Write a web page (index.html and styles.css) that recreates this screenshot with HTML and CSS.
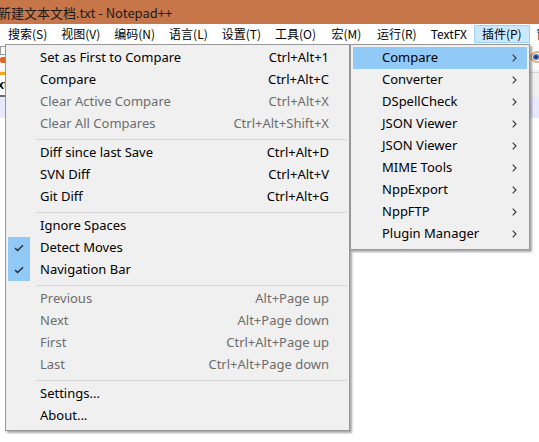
FILE: index.html
```html
<!DOCTYPE html>
<html>
<head>
<meta charset="utf-8">
<link rel="stylesheet" href="styles.css">
</head>
<body>
<div class="app">
  <div class="titlebar"><span class="title">新建文本文档.txt - Notepad++</span></div>
  <div class="menubar">
    <span class="mb-item">搜索(S)</span>
    <span class="mb-item">视图(V)</span>
    <span class="mb-item">编码(N)</span>
    <span class="mb-item">语言(L)</span>
    <span class="mb-item">设置(T)</span>
    <span class="mb-item wide">工具(O)</span>
    <span class="mb-item wide">宏(M)</span>
    <span class="mb-item">运行(R)</span>
    <span class="mb-item">TextFX</span>
    <span class="mb-item active">插件(P)</span>
    <span class="mb-item">窗口(W)</span>
  </div>
  <div class="toolbar">
    <div class="tb-left">
      <span class="tb-doc"></span>
      <span class="tb-red"></span>
    </div>
    <div class="tb-right">
      <svg class="eye" width="14" height="14" viewBox="0 0 14 14"><ellipse cx="8" cy="7" rx="6" ry="5" fill="#fff" stroke="#e0965a" stroke-width="1.5"/><circle cx="7" cy="7" r="3" fill="#3b6fb0"/><circle cx="7" cy="7" r="1.3" fill="#1a2d50"/></svg>
    </div>
  </div>
  <div class="tabbar">
    <div class="tab-active"><span class="tab-text">new 1.txt:</span></div>
    <div class="tab-rest"></div>
  </div>
  <div class="editor">
    <div class="curline"></div>
  </div>

  <div class="menu main-menu">
    <div class="mi"><span class="gut"></span><span class="lbl">Set as First to Compare</span><span class="sc">Ctrl+Alt+1</span></div>
    <div class="mi"><span class="gut"></span><span class="lbl">Compare</span><span class="sc">Ctrl+Alt+C</span></div>
    <div class="mi dis"><span class="gut"></span><span class="lbl">Clear Active Compare</span><span class="sc">Ctrl+Alt+X</span></div>
    <div class="mi dis"><span class="gut"></span><span class="lbl">Clear All Compares</span><span class="sc">Ctrl+Alt+Shift+X</span></div>
    <div class="sep"></div>
    <div class="mi"><span class="gut"></span><span class="lbl">Diff since last Save</span><span class="sc">Ctrl+Alt+D</span></div>
    <div class="mi"><span class="gut"></span><span class="lbl">SVN Diff</span><span class="sc">Ctrl+Alt+V</span></div>
    <div class="mi"><span class="gut"></span><span class="lbl">Git Diff</span><span class="sc">Ctrl+Alt+G</span></div>
    <div class="sep"></div>
    <div class="mi"><span class="gut"></span><span class="lbl">Ignore Spaces</span><span class="sc"></span></div>
    <div class="mi"><span class="gut checked"><svg width="10" height="8" viewBox="0 0 10 8"><polyline points="1,4 3.6,6.6 9,1.2" fill="none" stroke="#2b2b2b" stroke-width="1.4"/></svg></span><span class="lbl">Detect Moves</span><span class="sc"></span></div>
    <div class="mi"><span class="gut checked"><svg width="10" height="8" viewBox="0 0 10 8"><polyline points="1,4 3.6,6.6 9,1.2" fill="none" stroke="#2b2b2b" stroke-width="1.4"/></svg></span><span class="lbl">Navigation Bar</span><span class="sc"></span></div>
    <div class="sep"></div>
    <div class="mi dis"><span class="gut"></span><span class="lbl">Previous</span><span class="sc">Alt+Page up</span></div>
    <div class="mi dis"><span class="gut"></span><span class="lbl">Next</span><span class="sc">Alt+Page down</span></div>
    <div class="mi dis"><span class="gut"></span><span class="lbl">First</span><span class="sc">Ctrl+Alt+Page up</span></div>
    <div class="mi dis"><span class="gut"></span><span class="lbl">Last</span><span class="sc">Ctrl+Alt+Page down</span></div>
    <div class="sep"></div>
    <div class="mi"><span class="gut"></span><span class="lbl">Settings...</span><span class="sc"></span></div>
    <div class="mi"><span class="gut"></span><span class="lbl">About...</span><span class="sc"></span></div>
  </div>

  <div class="menu sub-menu">
    <div class="si hot"><span class="lbl">Compare</span><svg class="arr" width="5" height="8" viewBox="0 0 5 8"><polyline points="0.7,0.7 4,4 0.7,7.3" fill="none" stroke="#333" stroke-width="1.1"/></svg></div>
    <div class="si"><span class="lbl">Converter</span><svg class="arr" width="5" height="8" viewBox="0 0 5 8"><polyline points="0.7,0.7 4,4 0.7,7.3" fill="none" stroke="#333" stroke-width="1.1"/></svg></div>
    <div class="si"><span class="lbl">DSpellCheck</span><svg class="arr" width="5" height="8" viewBox="0 0 5 8"><polyline points="0.7,0.7 4,4 0.7,7.3" fill="none" stroke="#333" stroke-width="1.1"/></svg></div>
    <div class="si"><span class="lbl">JSON Viewer</span><svg class="arr" width="5" height="8" viewBox="0 0 5 8"><polyline points="0.7,0.7 4,4 0.7,7.3" fill="none" stroke="#333" stroke-width="1.1"/></svg></div>
    <div class="si"><span class="lbl">JSON Viewer</span><svg class="arr" width="5" height="8" viewBox="0 0 5 8"><polyline points="0.7,0.7 4,4 0.7,7.3" fill="none" stroke="#333" stroke-width="1.1"/></svg></div>
    <div class="si"><span class="lbl">MIME Tools</span><svg class="arr" width="5" height="8" viewBox="0 0 5 8"><polyline points="0.7,0.7 4,4 0.7,7.3" fill="none" stroke="#333" stroke-width="1.1"/></svg></div>
    <div class="si"><span class="lbl">NppExport</span><svg class="arr" width="5" height="8" viewBox="0 0 5 8"><polyline points="0.7,0.7 4,4 0.7,7.3" fill="none" stroke="#333" stroke-width="1.1"/></svg></div>
    <div class="si"><span class="lbl">NppFTP</span><svg class="arr" width="5" height="8" viewBox="0 0 5 8"><polyline points="0.7,0.7 4,4 0.7,7.3" fill="none" stroke="#333" stroke-width="1.1"/></svg></div>
    <div class="si"><span class="lbl">Plugin Manager</span><svg class="arr" width="5" height="8" viewBox="0 0 5 8"><polyline points="0.7,0.7 4,4 0.7,7.3" fill="none" stroke="#333" stroke-width="1.1"/></svg></div>
  </div>
</div>
</body>
</html>
```

FILE: styles.css
```css
* { box-sizing: border-box; }
html, body { margin: 0; padding: 0; }
body {
  width: 539px;
  height: 442px;
  overflow: hidden;
  background: #ffffff;
  font-family: "Noto Sans", "Noto Sans CJK SC", sans-serif;
  font-size: 12px;
  color: #000;
}
.app { position: relative; width: 539px; height: 442px; overflow: hidden; }

.titlebar {
  height: 24px;
  background: #c7764a;
  display: flex;
  align-items: center;
  white-space: nowrap;
}
.title {
  margin-left: -2px;
  font-family: "Noto Sans CJK SC", "Noto Sans", sans-serif;
  font-size: 13px;
  color: #1a1a1a;
}

.menubar {
  height: 20px;
  background: #fff;
  display: flex;
  align-items: stretch;
  padding-left: 0;
  white-space: nowrap;
  font-family: "Noto Sans CJK SC", sans-serif;
  font-size: 12px;
}
.mb-item {
  display: flex;
  align-items: center;
  padding: 0 6px 1px 6px;
  border: 1px solid transparent;
  margin-top: 1px;
  margin-bottom: 1px;
}
.mb-item:first-child { padding-left: 7px; }
.mb-item.wide { padding-right: 7.5px; }
.mb-item.active { background: #cce8ff; border-color: #99d1ff; padding-left: 7px; padding-right: 7px; }

.toolbar {
  height: 26px;
  background: #fbfbfb;
  display: flex;
  justify-content: space-between;
}
.tb-left { position: relative; width: 6px; }
.tb-doc {
  display: block;
  width: 8px; height: 9px;
  margin-top: 2px;
  background: #fff;
  border: 1px solid #9a9a9a;
}
.tb-red {
  display: block;
  width: 8px; height: 6px;
  margin-top: 2px;
  background: #e0642a;
  border-radius: 2px;
}
.tb-right { display: flex; align-items: center; padding-top: 0; }
.eye { display: block; margin-right: -4px; }

.tabbar {
  height: 27px;
  display: flex;
  background: #f0f0f0;
}
.tab-active {
  width: 60px;
  margin-top: 2px;
  background: #fff;
  border-top: 3px solid #f5a623;
  border-bottom: 2px solid #6d6d6d;
  display: flex;
  align-items: center;
  justify-content: flex-end;
  padding-right: 48px;
  font-weight: bold;
  font-size: 12px;
  font-family: "Liberation Sans", sans-serif;
  overflow: hidden;
}
.tab-text { white-space: nowrap; }
.tab-rest { flex: 1; border-top: 1px solid #d6d6d6; margin-top: 2px; }

.editor { background: #fff; height: 400px; }
.curline { height: 21px; background: #e8e8ff; }

.menu {
  position: absolute;
  background: #f0f0f0;
  border: 1px solid #979797;
  box-shadow: 2px 2px 2px rgba(0,0,0,0.35);
  padding: 2px;
  font-family: "Noto Sans", "Noto Sans CJK SC", sans-serif;
  font-size: 13px;
}
.main-menu { left: 5px; top: 44px; width: 345px; padding-bottom: 3px; }
.sub-menu { left: 350px; top: 44px; width: 180px; padding-bottom: 4px; }

.mi {
  height: 22px;
  display: flex;
  align-items: center;
  padding-right: 18px;
  padding-bottom: 2px;
  white-space: nowrap;
}
.mi .gut {
  width: 22px; height: 22px;
  display: flex;
  align-items: center;
  justify-content: center;
  margin-right: 10px;
  margin-bottom: -2px;
}
.mi .gut.checked { background: #91c9f7; }
.mi .lbl { flex: 1; }
.mi .sc { text-align: right; }
.mi.dis { color: #6d6d6d; }

.sep {
  height: 7px;
  padding-top: 4px;
  margin-left: 28px;
}
.sep::before {
  content: "";
  display: block;
  height: 1px;
  background: #d7d7d7;
}

.si {
  height: 22px;
  display: flex;
  align-items: center;
  padding-left: 29px;
  padding-right: 10px;
  padding-bottom: 2px;
  white-space: nowrap;
}
.si.hot { background: #91c9f7; }
.si .lbl { flex: 1; }
.si .arr { display: block; margin-top: 2px; }
```
